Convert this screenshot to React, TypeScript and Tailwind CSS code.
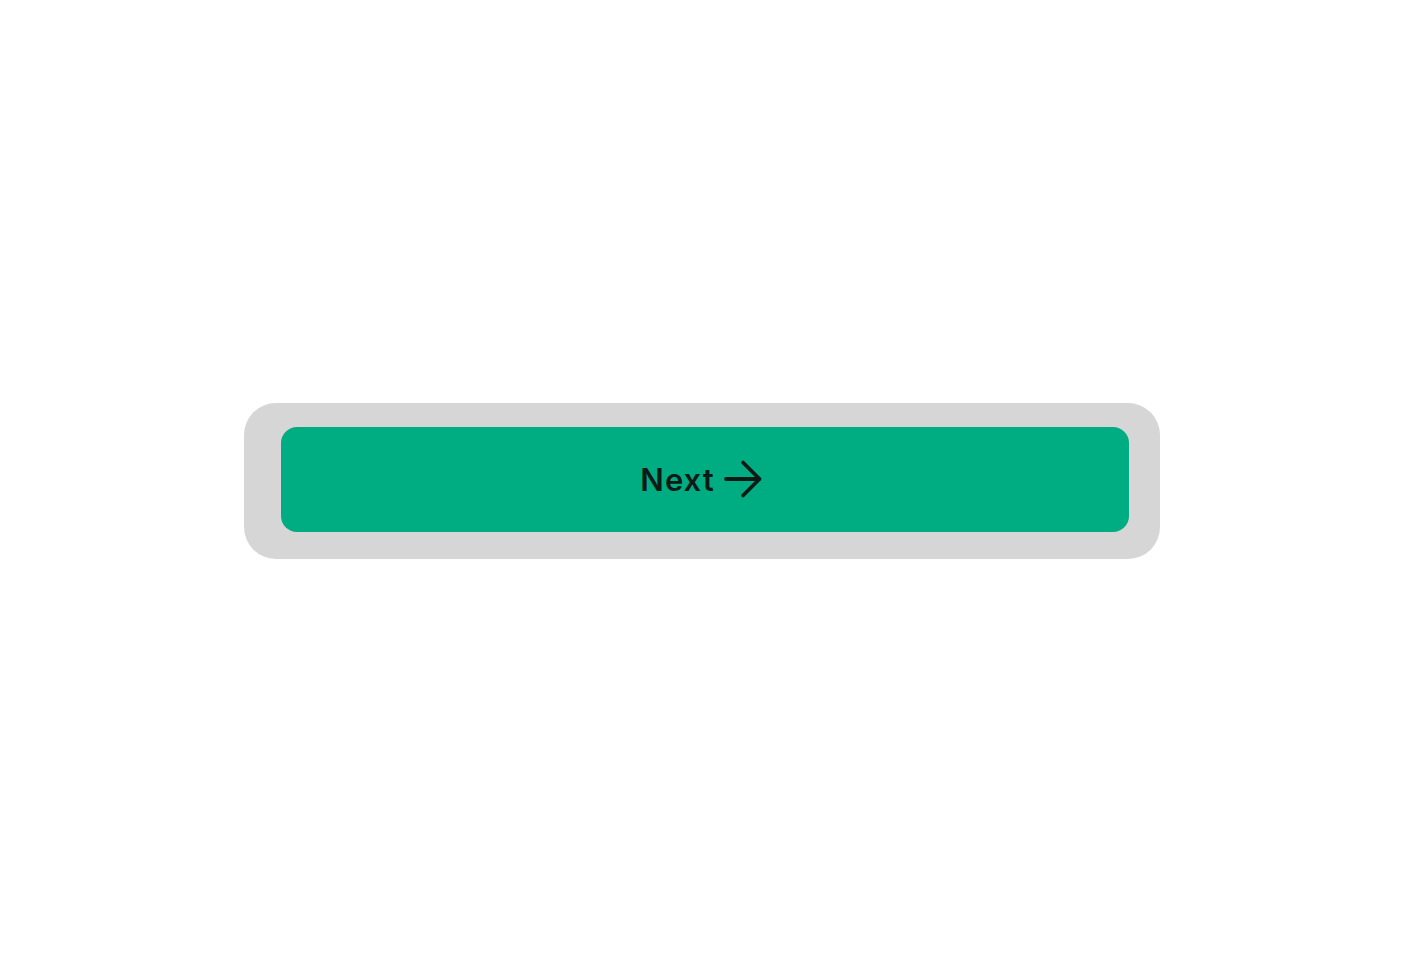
import React from 'react';

export default function App() {
    return (
        <div className="min-h-screen w-full bg-white flex items-center justify-center">
            <div className="w-[916px] h-[156px] bg-[#d6d6d6] rounded-[32px] pl-[37px] pr-[31px] pt-[24px] pb-[27px] flex">
                <button
                    className="flex-1 rounded-[16px] bg-[#00ad83] flex items-center justify-center gap-[8px] pr-[7px] text-[#0b1a14]"
                    style={{ fontFamily: 'Inter, "Noto Sans", sans-serif' }}
                >
                    <span className="text-[31px] font-semibold tracking-[1px] leading-none">Next</span>
                    <svg width="40" height="40" viewBox="0 0 40 40" fill="none" stroke="currentColor" strokeWidth="3.8" strokeLinecap="round" strokeLinejoin="round">
                        <path d="M3 20h33" />
                        <path d="M20 3.5l16.5 16.5-16.5 16.5" />
                    </svg>
                </button>
            </div>
        </div>
    );
}
